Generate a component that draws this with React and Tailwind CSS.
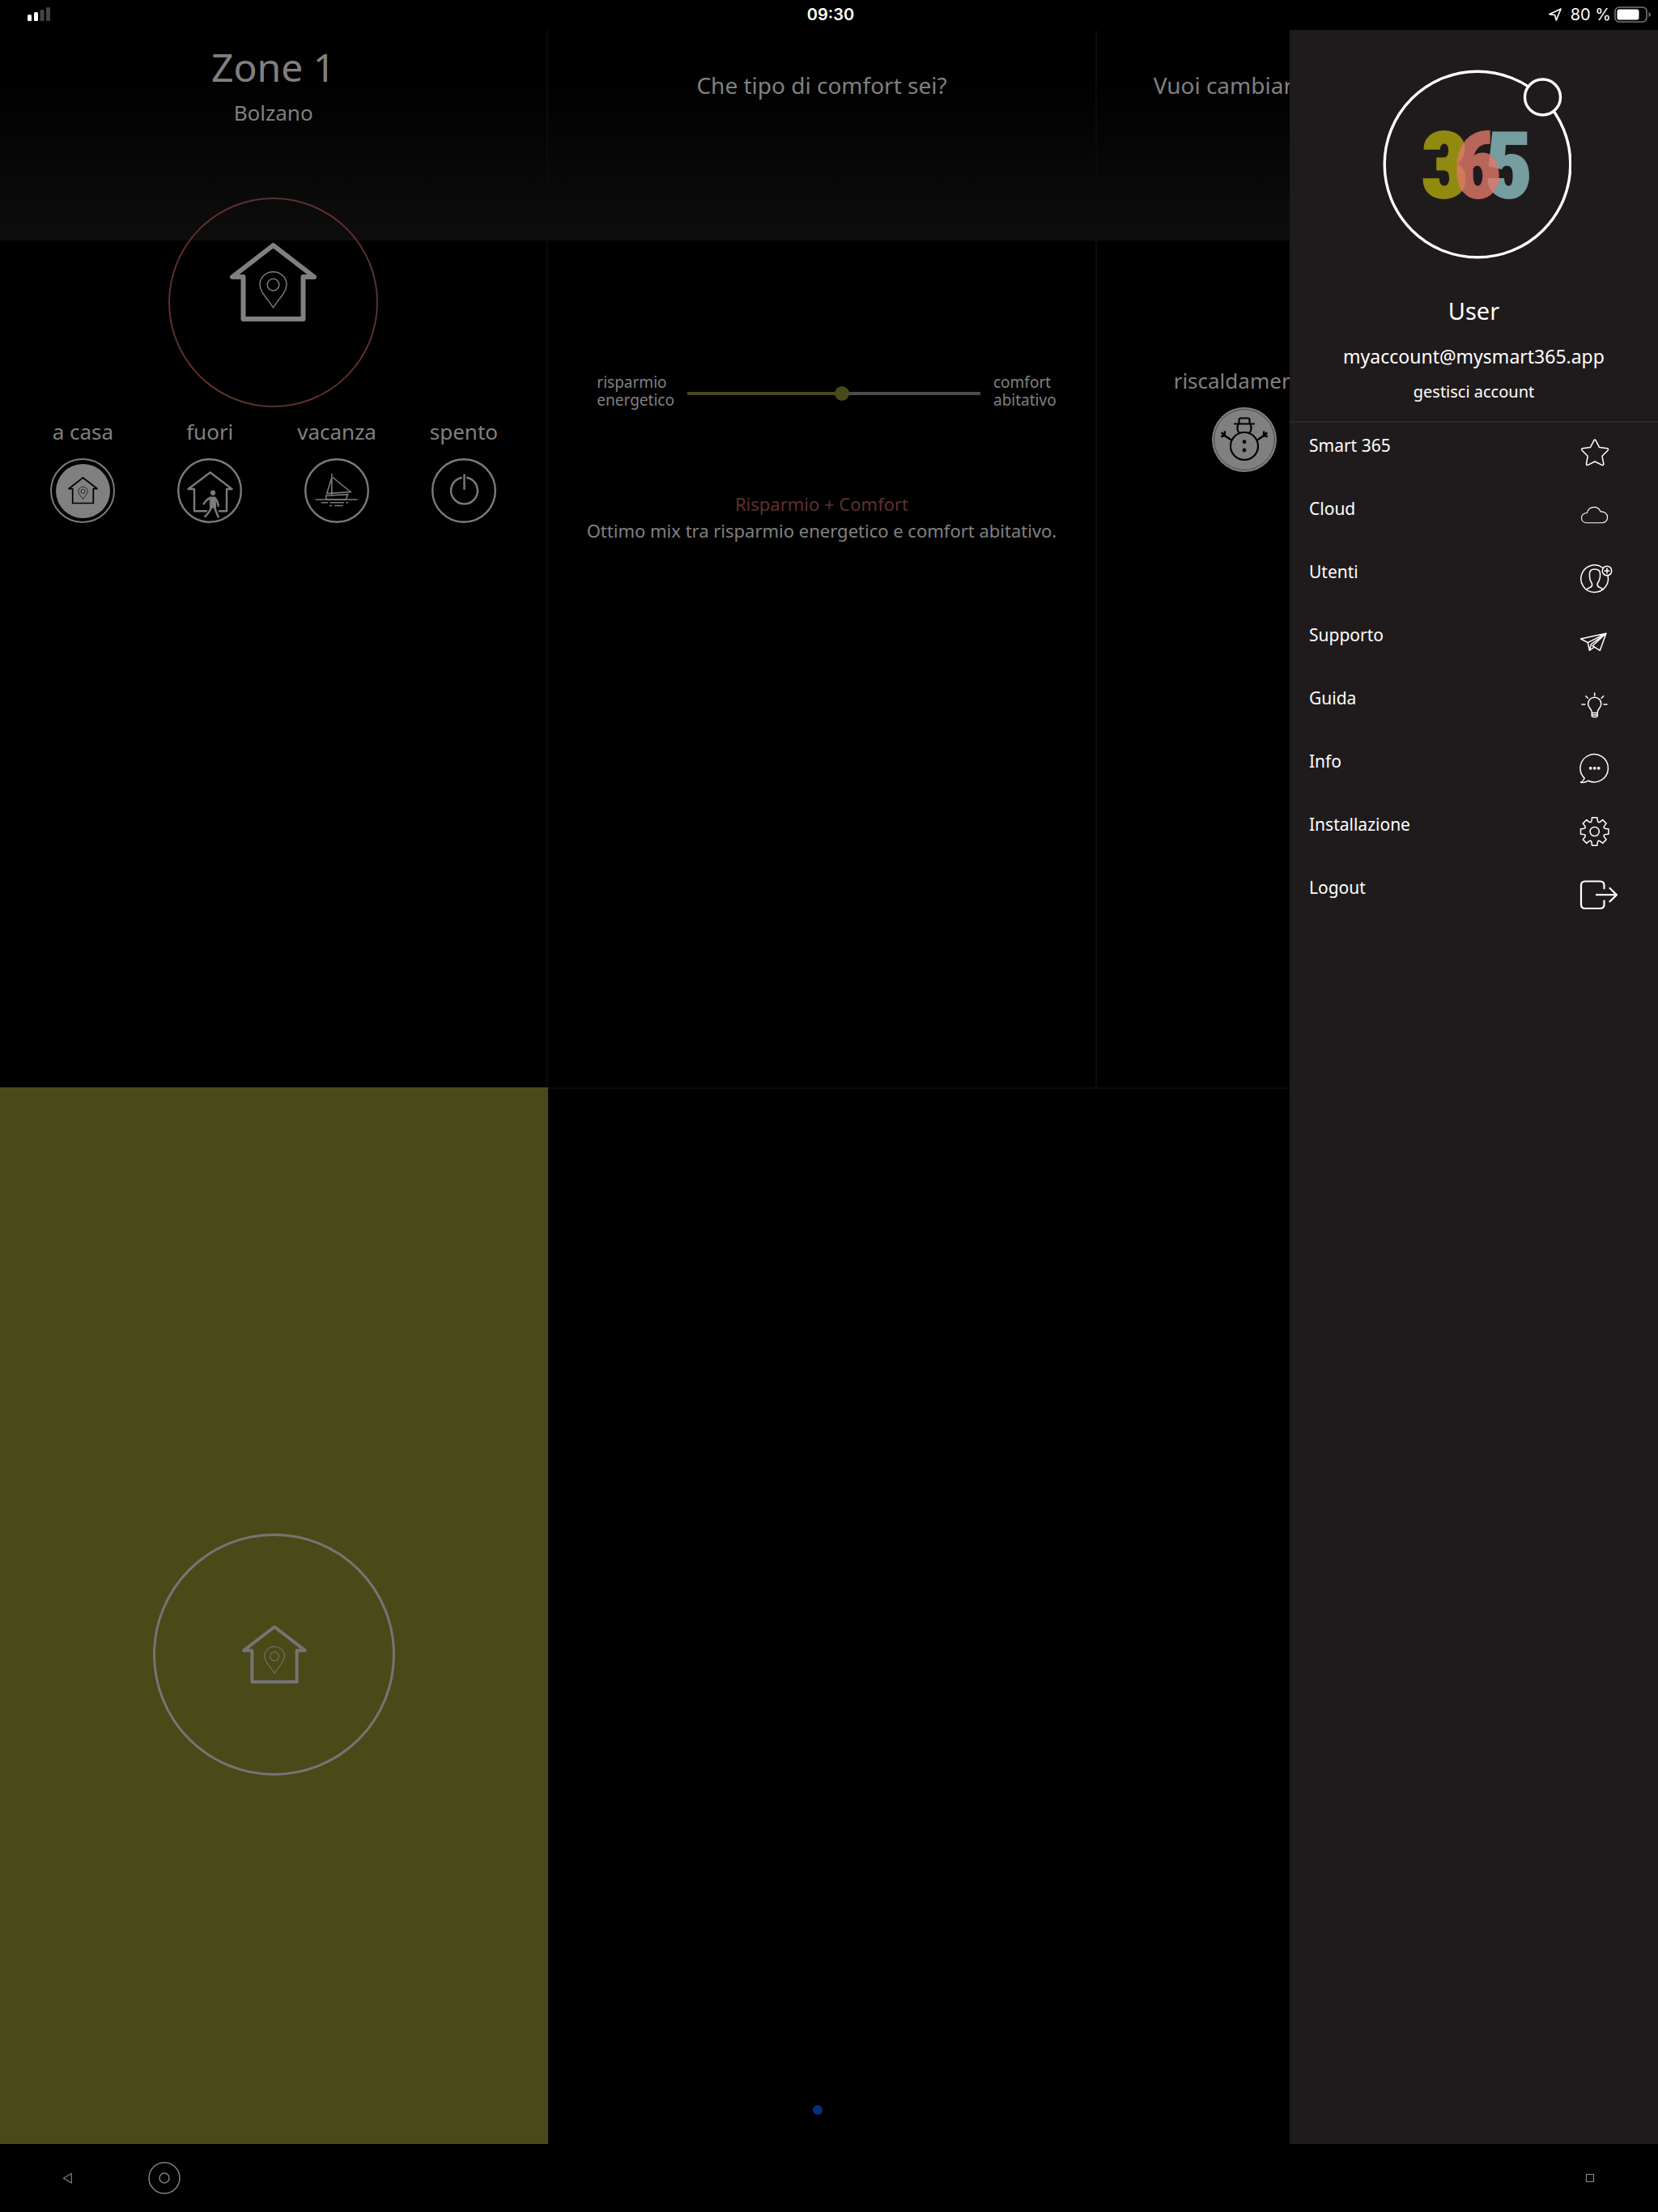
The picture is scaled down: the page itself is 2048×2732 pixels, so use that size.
import { useState } from "react";

function House({ className, wall = 6, pin = 1.4 }) {
  return (
    <svg viewBox="0 0 107 97" className={className} fill="none" stroke="currentColor" strokeLinejoin="round">
      <path
        strokeWidth={wall}
        d="M53.5 3 L3 42 H16.5 V94 H90.5 V42 H104 Z"
      />
      <path
        strokeWidth={pin}
        d="M53.5 80 C47 69 37 61 37 51.5 A16.5 15.8 0 0 1 70 51.5 C70 61 60 69 53.5 80 Z"
      />
      <circle cx="53.5" cy="51.7" r="7.3" strokeWidth={pin} />
    </svg>
  );
}

function HomeMode() {
  return (
    <span className="flex size-full items-center justify-center rounded-full border-2 border-[#7b7b7b]">
      <span className="flex size-[67px] items-center justify-center rounded-full bg-[#808080] text-black">
        <House className="w-[37px]" wall={5} pin={2} />
      </span>
    </span>
  );
}

function AwayMode() {
  return (
    <svg viewBox="0 0 80 80" className="size-full" fill="none" stroke="currentColor" strokeWidth="2.4" strokeLinecap="round" strokeLinejoin="round">
      <circle cx="40" cy="40" r="38.8" />
      <path d="M36 65.3 H21 V38 H13.5 L40.7 17.5 L67.5 38 H61 V65.3 H52" />
      <circle cx="44" cy="42.7" r="3.1" fill="currentColor" stroke="none" />
      <path fill="currentColor" strokeWidth="1" d="M40.5 48 H47 L47.6 61 H40.8 Z" />
      <path d="M41 49 Q35.5 50.5 32.8 56.3 M47 49.5 Q50 53 50.6 58.8 M42 61 Q39 68 34.3 71.7 M46 61 L50.6 72.5" />
    </svg>
  );
}

function HolidayMode() {
  return (
    <svg viewBox="0 0 80 80" className="size-full" fill="none" stroke="currentColor" strokeWidth="1.6">
      <circle cx="40" cy="40" r="38.8" strokeWidth="2.4" />
      <path d="M33.8 19 V45.5 M34.8 23.5 L57 41.5 L27.8 43.5 L33.3 25" />
      <path d="M26.6 46.3 L53.7 44.7 L51 51 H27 Z" />
      <path d="M13.5 51 H65.6 M21 54.7 H29 M31.5 54.7 H48.8 M51.4 54.7 H54 M31 58.5 H34 M37 58.5 H47.6" />
    </svg>
  );
}

function OffMode() {
  return (
    <svg viewBox="0 0 80 80" className="size-full" fill="none" stroke="currentColor" strokeWidth="2.4">
      <circle cx="40" cy="40" r="38.8" />
      <path strokeLinecap="round" d="M40.5 20.5 V38 M36.8 24 A16.4 16.4 0 1 0 44.2 24" />
    </svg>
  );
}

function Snowman() {
  return (
    <svg viewBox="0 0 80 80" className="size-full" fill="none" stroke="#000" strokeWidth="2.2" strokeLinecap="round" strokeLinejoin="round">
      <circle cx="40" cy="40" r="40" fill="#808080" stroke="none" />
      <circle cx="40" cy="40" r="37.4" stroke="#3a3a3a" strokeWidth="0.8" />
      <path d="M28 20.5 H52 M33.5 20.5 V15.5 Q33.5 13.5 35.5 13.5 H44.5 Q46.5 13.5 46.5 15.5 V20.5" />
      <path d="M32.5 21 Q30 27 33.5 31.5 M47.5 21 Q50 27 46.5 31.5" />
      <circle cx="40" cy="48" r="17" />
      <circle cx="40" cy="42.7" r="2.4" fill="#000" stroke="none" />
      <circle cx="40" cy="53" r="2.4" fill="#000" stroke="none" />
      <path strokeWidth="2.6" d="M24 40.5 L15.8 35 M15.8 35 L12.2 36 M15.8 35 L12.5 32 M15.8 35 L15.8 30.5" />
      <path strokeWidth="2.6" d="M56 40.5 L64.2 35 M64.2 35 L67.8 36 M64.2 35 L67.5 32 M64.2 35 L64.2 30.5" />
    </svg>
  );
}

function Logo() {
  return (
    <svg viewBox="0 0 240 234" className="h-[234px] w-[240px]" role="img" aria-label="365">
      <circle cx="124" cy="117" r="114.8" fill="none" stroke="#fff" strokeWidth="3.4" />
      <circle cx="204.5" cy="34" r="22" fill="#1f1b1c" stroke="#fff" strokeWidth="3.4" />
      <g
        fontFamily="'Liberation Sans Narrow', 'Roboto Condensed', Roboto"
        fontWeight="900"
        fontSize="114"
        textAnchor="middle"
        strokeWidth="2"
      >
        <text x="84" y="158" fill="#918a10" stroke="#918a10">3</text>
        <text x="163" y="158" fill="#769ea0" stroke="#769ea0">5</text>
        <text x="124" y="158" fill="#e0786a" stroke="#e0786a" opacity="0.8">6</text>
      </g>
    </svg>
  );
}

const GEAR = Array.from({ length: 8 }, (_, i) => {
  const a = (i * Math.PI) / 4;
  const p = (x, y) =>
    `${(x * Math.cos(a) - y * Math.sin(a)).toFixed(2)} ${(x * Math.sin(a) + y * Math.cos(a)).toFixed(2)}`;
  return `${i ? "L" : "M"}${p(-5.2, -11.4)} Q${p(-3.6, -12)} ${p(-3.6, -13.5)} L${p(-3.2, -17.2)} L${p(3.2, -17.2)} L${p(3.6, -13.5)} Q${p(3.6, -12)} ${p(5.2, -11.4)}`;
}).join(" ");

const MENU = [
  {
    label: "Smart 365",
    icon: (
      <path d="M18.8 4.2 Q20 2 21.2 4.2 L25.6 12.6 L35.2 13.8 Q37.6 14.4 36 16.2 L29 23.3 L30.8 33 Q30.8 35.2 28.8 34.3 L20 30 L11.4 34.3 Q9.4 35.2 9.5 33 L11.2 23.3 L4.2 16.2 Q2.6 14.4 5 13.8 L14.4 12.6 Z" />
    ),
  },
  {
    label: "Cloud",
    icon: (
      <path strokeWidth="1.1" d="M9.5 27.7 C5.5 27.5 3.5 24.5 3.5 21.5 C3.5 18 6.5 15.4 10.3 15.5 C11.5 11 15 8.4 18.8 8.4 C22.8 8.4 25.8 10.6 27 14 C31.5 13.4 35.6 16.4 35.6 21 C35.6 24.6 33.2 27.7 29.4 27.7 Z" />
    ),
  },
  {
    label: "Utenti",
    icon: (
      <>
        <path d="M29.3 5 A16.8 16.8 0 1 0 36 15" />
        <circle cx="35" cy="9" r="5.8" />
        <path d="M35 6 V12 M32 9 H38" />
        <path d="M9.5 31.8 L15 29 Q17 28 16.5 25 Q13.5 20.5 13.5 16.5 V12.5 Q13.5 7 19.7 7 Q26.5 7 26.5 12.5 V16.5 Q26 20.5 23.2 25 Q22.8 28 25 29 L30.5 31.8" />
      </>
    ),
  },
  {
    label: "Supporto",
    icon: (
      <path d="M34 8.3 L2.6 15 L11.3 19.7 L34 8.3 L26.3 29.3 L17 23.7 L34 8.3 M11.3 19.7 L13.3 29.3 L19.5 25 M13.3 29.3 L15.5 21.5 L34 8.3" />
    ),
  },
  {
    label: "Guida",
    icon: (
      <path d="M16.3 27.5 C16 23.5 11.6 22 11.6 17.3 A8.1 8.1 0 0 1 27.8 17.3 C27.8 22 23.5 23.5 23.2 27.5 V32 Q23.2 33.4 21.8 33.4 H17.7 Q16.3 33.4 16.3 32 Z M16.3 28.5 H23.2 M16.3 31 H23.2 M19.7 4 V7.3 M4 18 H8 M31 18 H35 M8.7 7.8 L11.3 10.3 M30.7 7.8 L28.1 10.3" />
    ),
  },
  {
    label: "Info",
    icon: (
      <>
        <path d="M7.2 31.1 A17.2 17.2 0 1 1 11.8 34.3 Q7 37 2.6 36.2 Q6.3 34.3 7.2 31.1 Z" />
        <g fill="currentColor" stroke="none">
          <circle cx="14.7" cy="18.8" r="1.9" />
          <circle cx="19.7" cy="18.8" r="1.9" />
          <circle cx="24.7" cy="18.8" r="1.9" />
        </g>
      </>
    ),
  },
  {
    label: "Installazione",
    icon: (
      <g transform="translate(19.7 19)">
        <path d={GEAR + " Z"} />
        <circle r="5.6" />
      </g>
    ),
  },
  {
    label: "Logout",
    icon: (
      <path strokeWidth="2.2" d="M31.5 11.3 V7.5 Q31.5 2.5 26.5 2.5 H8 Q3 2.5 3 7.5 V31 Q3 36 8 36 H26.5 Q31.5 36 31.5 31 V26.5 M22 19.2 H47 M38.5 11 L47 19.2 L38.5 27.4" />
    ),
  },
];

const MODES = [
  { label: "a casa", icon: HomeMode },
  { label: "fuori", icon: AwayMode },
  { label: "vacanza", icon: HolidayMode },
  { label: "spento", icon: OffMode },
];

const panel =
  "flex flex-col border-r-2 border-[#0b0b0b] bg-[linear-gradient(#000_20%,#0d0d0d)] bg-[length:100%_260px] bg-no-repeat";

function StatusBar() {
  return (
    <header className="flex h-[37px] items-center pr-2 pb-px pl-8 font-['Inter',sans-serif] text-xl leading-6 text-white">
      <div className="flex-1">
        <svg viewBox="0 0 30 18" className="h-[18px] w-[30px]" fill="#fff">
          <rect x="2" y="9" width="5" height="8" rx="1.5" />
          <rect x="10" y="6" width="5" height="11" rx="1.5" />
          <rect x="17.5" y="3" width="5" height="14" rx="1.5" fill="#444" />
          <rect x="25" y="0" width="5" height="17" rx="1.5" fill="#444" />
        </svg>
      </div>
      <span className="pr-5 text-center font-semibold">09:30</span>
      <div className="flex flex-1 items-center justify-end">
        <svg viewBox="0 0 18 18" className="mr-2.5 size-[18px]" fill="none" stroke="#fff" strokeWidth="1.7" strokeLinejoin="round">
          <path d="M16 2 L2 8.6 L8.6 9.5 L10.3 16 Z" />
        </svg>
        <span>80 %</span>
        <svg viewBox="0 0 46 20" className="ml-1 h-5 w-[46px]">
          <rect x="1" y="1" width="39" height="18" rx="5" fill="none" stroke="#777" strokeWidth="1.6" />
          <rect x="3.5" y="3.5" width="27" height="13" rx="2.5" fill="#fff" />
          <path d="M42.5 7 Q45 8 45 10 Q45 12 42.5 13 Z" fill="#777" />
        </svg>
      </div>
    </header>
  );
}

function Drawer() {
  return (
    <aside className="absolute inset-y-0 right-0 w-[455px] bg-[#1f1b1c] text-white">
      <div className="flex flex-col items-center border-b-2 border-[#2c2829] pt-[49px] pb-5">
        <Logo />
        <h2 className="mt-[42px] text-[29px] leading-[44px]">User</h2>
        <p className="mt-4 text-[23px] leading-9">myaccount@mysmart365.app</p>
        <a href="#account" className="mt-[10px] text-xl leading-8">gestisci account</a>
      </div>
      <nav>
        {MENU.map(({ label, icon }) => (
          <a key={label} href="#menu" className="flex h-[78px] items-start justify-between pr-12 pl-6">
            <span className="pt-[13px] text-[21px] leading-[30px]">{label}</span>
            <svg
              viewBox="0 0 50 40"
              className="mt-[18px] h-10 w-[50px]"
              fill="none"
              stroke="currentColor"
              strokeWidth="1.5"
              strokeLinecap="round"
              strokeLinejoin="round"
            >
              {icon}
            </svg>
          </a>
        ))}
      </nav>
    </aside>
  );
}

export default function App() {
  const [mode, setMode] = useState("a casa");
  const [comfort, setComfort] = useState(53);

  return (
    <div className="flex min-h-screen flex-col bg-black font-['Noto_Sans',sans-serif] text-[#808080]">
      <StatusBar />

      <div className="relative flex flex-1 overflow-hidden">
        <main className="grid flex-1 grid-cols-3 grid-rows-2 pr-4">
          {/* Zone */}
          <section className={`${panel} items-center pt-[18px]`}>
            <h1 className="text-[48px] leading-[56px]">Zone 1</h1>
            <p className="mt-2 text-[26px] leading-10">Bolzano</p>
            <div className="mt-[85px] flex size-[259px] justify-center rounded-full border-2 border-[#5f302f] pt-[54px]">
              <House className="h-[97px] w-[107px]" />
            </div>
            <div className="mt-3 grid w-full grid-cols-4 px-6">
              {MODES.map(({ label, icon: Icon }) => (
                <button
                  key={label}
                  type="button"
                  aria-pressed={mode === label}
                  onClick={() => setMode(label)}
                  className="flex flex-col items-center gap-[15px] text-[26px] leading-9"
                >
                  {label}
                  <span className="size-20 text-[#7b7b7b]">
                    <Icon />
                  </span>
                </button>
              ))}
            </div>
          </section>

          {/* Comfort */}
          <section className={`${panel} pt-12`}>
            <h2 className="text-center text-[28px] leading-10">Che tipo di comfort sei?</h2>
            <div className="mt-[336px] flex items-center gap-4 pr-12 pl-[60px] text-[19px] leading-[22px]">
              <label htmlFor="comfort">
                risparmio
                <br />
                energetico
              </label>
              <input
                id="comfort"
                type="range"
                min="0"
                max="100"
                value={comfort}
                onChange={(e) => setComfort(Number(e.target.value))}
                style={{ "--fill": `${comfort}%` }}
                className="mt-1.5 h-[18px] min-w-0 flex-1 appearance-none bg-transparent [&::-webkit-slider-runnable-track]:h-1 [&::-webkit-slider-runnable-track]:bg-[linear-gradient(to_right,#494a17_var(--fill),#4d4c4d_var(--fill))] [&::-webkit-slider-thumb]:-mt-[7px] [&::-webkit-slider-thumb]:size-[18px] [&::-webkit-slider-thumb]:appearance-none [&::-webkit-slider-thumb]:rounded-full [&::-webkit-slider-thumb]:bg-[#494a17]"
              />
              <span>
                comfort
                <br />
                abitativo
              </span>
            </div>
            <div className="mt-[101px] text-center text-[22px] leading-[33px]">
              <p className="text-[#5f302f]">Risparmio + Comfort</p>
              <p>Ottimo mix tra risparmio energetico e comfort abitativo.</p>
            </div>
          </section>

          {/* Season */}
          <section className={`${panel} items-start pt-12`}>
            <h2 className="pl-[70px] text-[28px] leading-10 whitespace-nowrap">Vuoi cambiare</h2>
            <button type="button" className="mt-[327px] ml-[95px] flex flex-col items-center gap-[15px] text-[26px] leading-9">
              riscaldamento
              <span className="size-20">
                <Snowman />
              </span>
            </button>
          </section>

          <section className="flex items-center justify-center bg-[#494a17] pt-24">
            <div className="flex size-[299px] items-center justify-center rounded-full border-3 border-[#757575] text-[#757575]">
              <House className="w-20" wall={5.4} />
            </div>
          </section>
          <section className="col-span-2 border-t-2 border-[#0b0b0b]" />
        </main>

        <span className="absolute bottom-9 left-1/2 size-3 -translate-x-5 rounded-full bg-[#032f83]" />
        <Drawer />
      </div>

      <footer className="flex h-[84px] items-center pr-[78px] pl-[77px]">
        <button type="button" aria-label="Indietro">
          <svg viewBox="0 0 14 14" className="size-3.5" fill="none" stroke="currentColor" strokeWidth="1.2">
            <path d="M11.3 1.5 V13 L1.5 7.3 Z" />
          </svg>
        </button>
        <button type="button" aria-label="Home" className="ml-[92px]">
          <svg viewBox="0 0 40 40" className="size-10" fill="none" stroke="currentColor" strokeWidth="1.5">
            <circle cx="20" cy="20" r="19" />
            <circle cx="20" cy="20" r="6" />
          </svg>
        </button>
        <button type="button" aria-label="Recenti" className="ml-auto">
          <svg viewBox="0 0 12 12" className="size-3" fill="none" stroke="currentColor" strokeWidth="1.2">
            <rect x="1.5" y="1.5" width="9" height="9" />
          </svg>
        </button>
      </footer>
    </div>
  );
}
